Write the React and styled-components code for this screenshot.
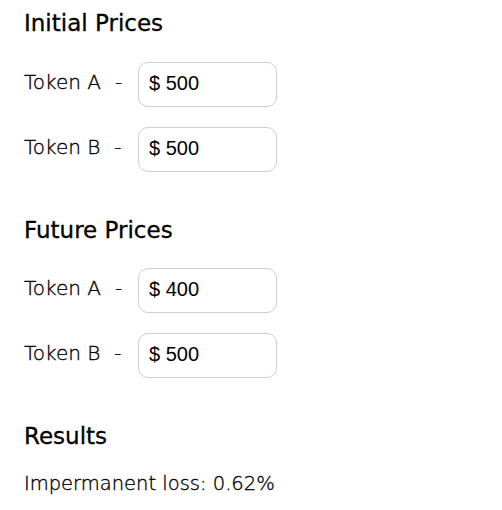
import React from "react";
import styled, { createGlobalStyle } from "styled-components";

const Global = createGlobalStyle`
  html, body { margin: 0; padding: 0; background: #ffffff; }
  body { font-family: "DejaVu Sans", "Open Sans", sans-serif; color: #111; }
`;

const Page = styled.div`
  padding: 0 24px;
  display: flex;
  flex-direction: column;
`;

const Section = styled.section`
  display: flex;
  flex-direction: column;
  margin-top: ${(p) => p.$top}px;
`;

const Heading = styled.h2`
  margin: 0 0 ${(p) => p.$gap}px 0;
  font-size: 23px;
  line-height: 30px;
  font-weight: 400;
  color: #000;
  -webkit-text-stroke: 0.3px #000;
`;

const Rows = styled.div`
  display: flex;
  flex-direction: column;
  gap: 20px;
`;

const Row = styled.div`
  display: flex;
  align-items: center;
`;

const Label = styled.span`
  width: 114px;
  margin-bottom: 5px;
  font-size: 20px;
  font-weight: 200;
  color: #000;
  -webkit-text-stroke: 0.35px #000;
  white-space: pre;
`;

const Dash = styled.span`
  margin-left: 14px;
`;

const Field = styled.div`
  box-sizing: border-box;
  width: 139px;
  height: 45px;
  border: 1px solid #cfcfcf;
  border-radius: 10px;
  display: flex;
  align-items: center;
  padding: 0 0 2px 10px;
  font-family: "Liberation Sans", Arial, sans-serif;
  font-size: 20px;
  color: #000;
`;

const Currency = styled.span`
  white-space: pre;
`;

const Input = styled.input`
  border: none;
  outline: none;
  padding: 0;
  width: 90px;
  background: transparent;
  font: inherit;
  color: inherit;
`;

const Result = styled.p`
  margin: 0;
  font-size: 19.5px;
  line-height: 24px;
  font-weight: 200;
  color: #000;
  -webkit-text-stroke: 0.35px #000;
`;

function PriceRow({ label, value }) {
  return (
    <Row>
      <Label>
        {label}
        <Dash>-</Dash>
      </Label>
      <Field>
        <Currency>{"$ "}</Currency>
        <Input defaultValue={value} />
      </Field>
    </Row>
  );
}

export default function App() {
  return (
    <>
      <Global />
      <Page>
        <Section $top={8}>
          <Heading $gap={24}>Initial Prices</Heading>
          <Rows>
            <PriceRow label="Token A" value="500" />
            <PriceRow label="Token B" value="500" />
          </Rows>
        </Section>
        <Section $top={43}>
          <Heading $gap={23}>Future Prices</Heading>
          <Rows>
            <PriceRow label="Token A" value="400" />
            <PriceRow label="Token B" value="500" />
          </Rows>
        </Section>
        <Section $top={43}>
          <Heading $gap={21}>Results</Heading>
          <Result>Impermanent loss: 0.62%</Result>
        </Section>
      </Page>
    </>
  );
}
